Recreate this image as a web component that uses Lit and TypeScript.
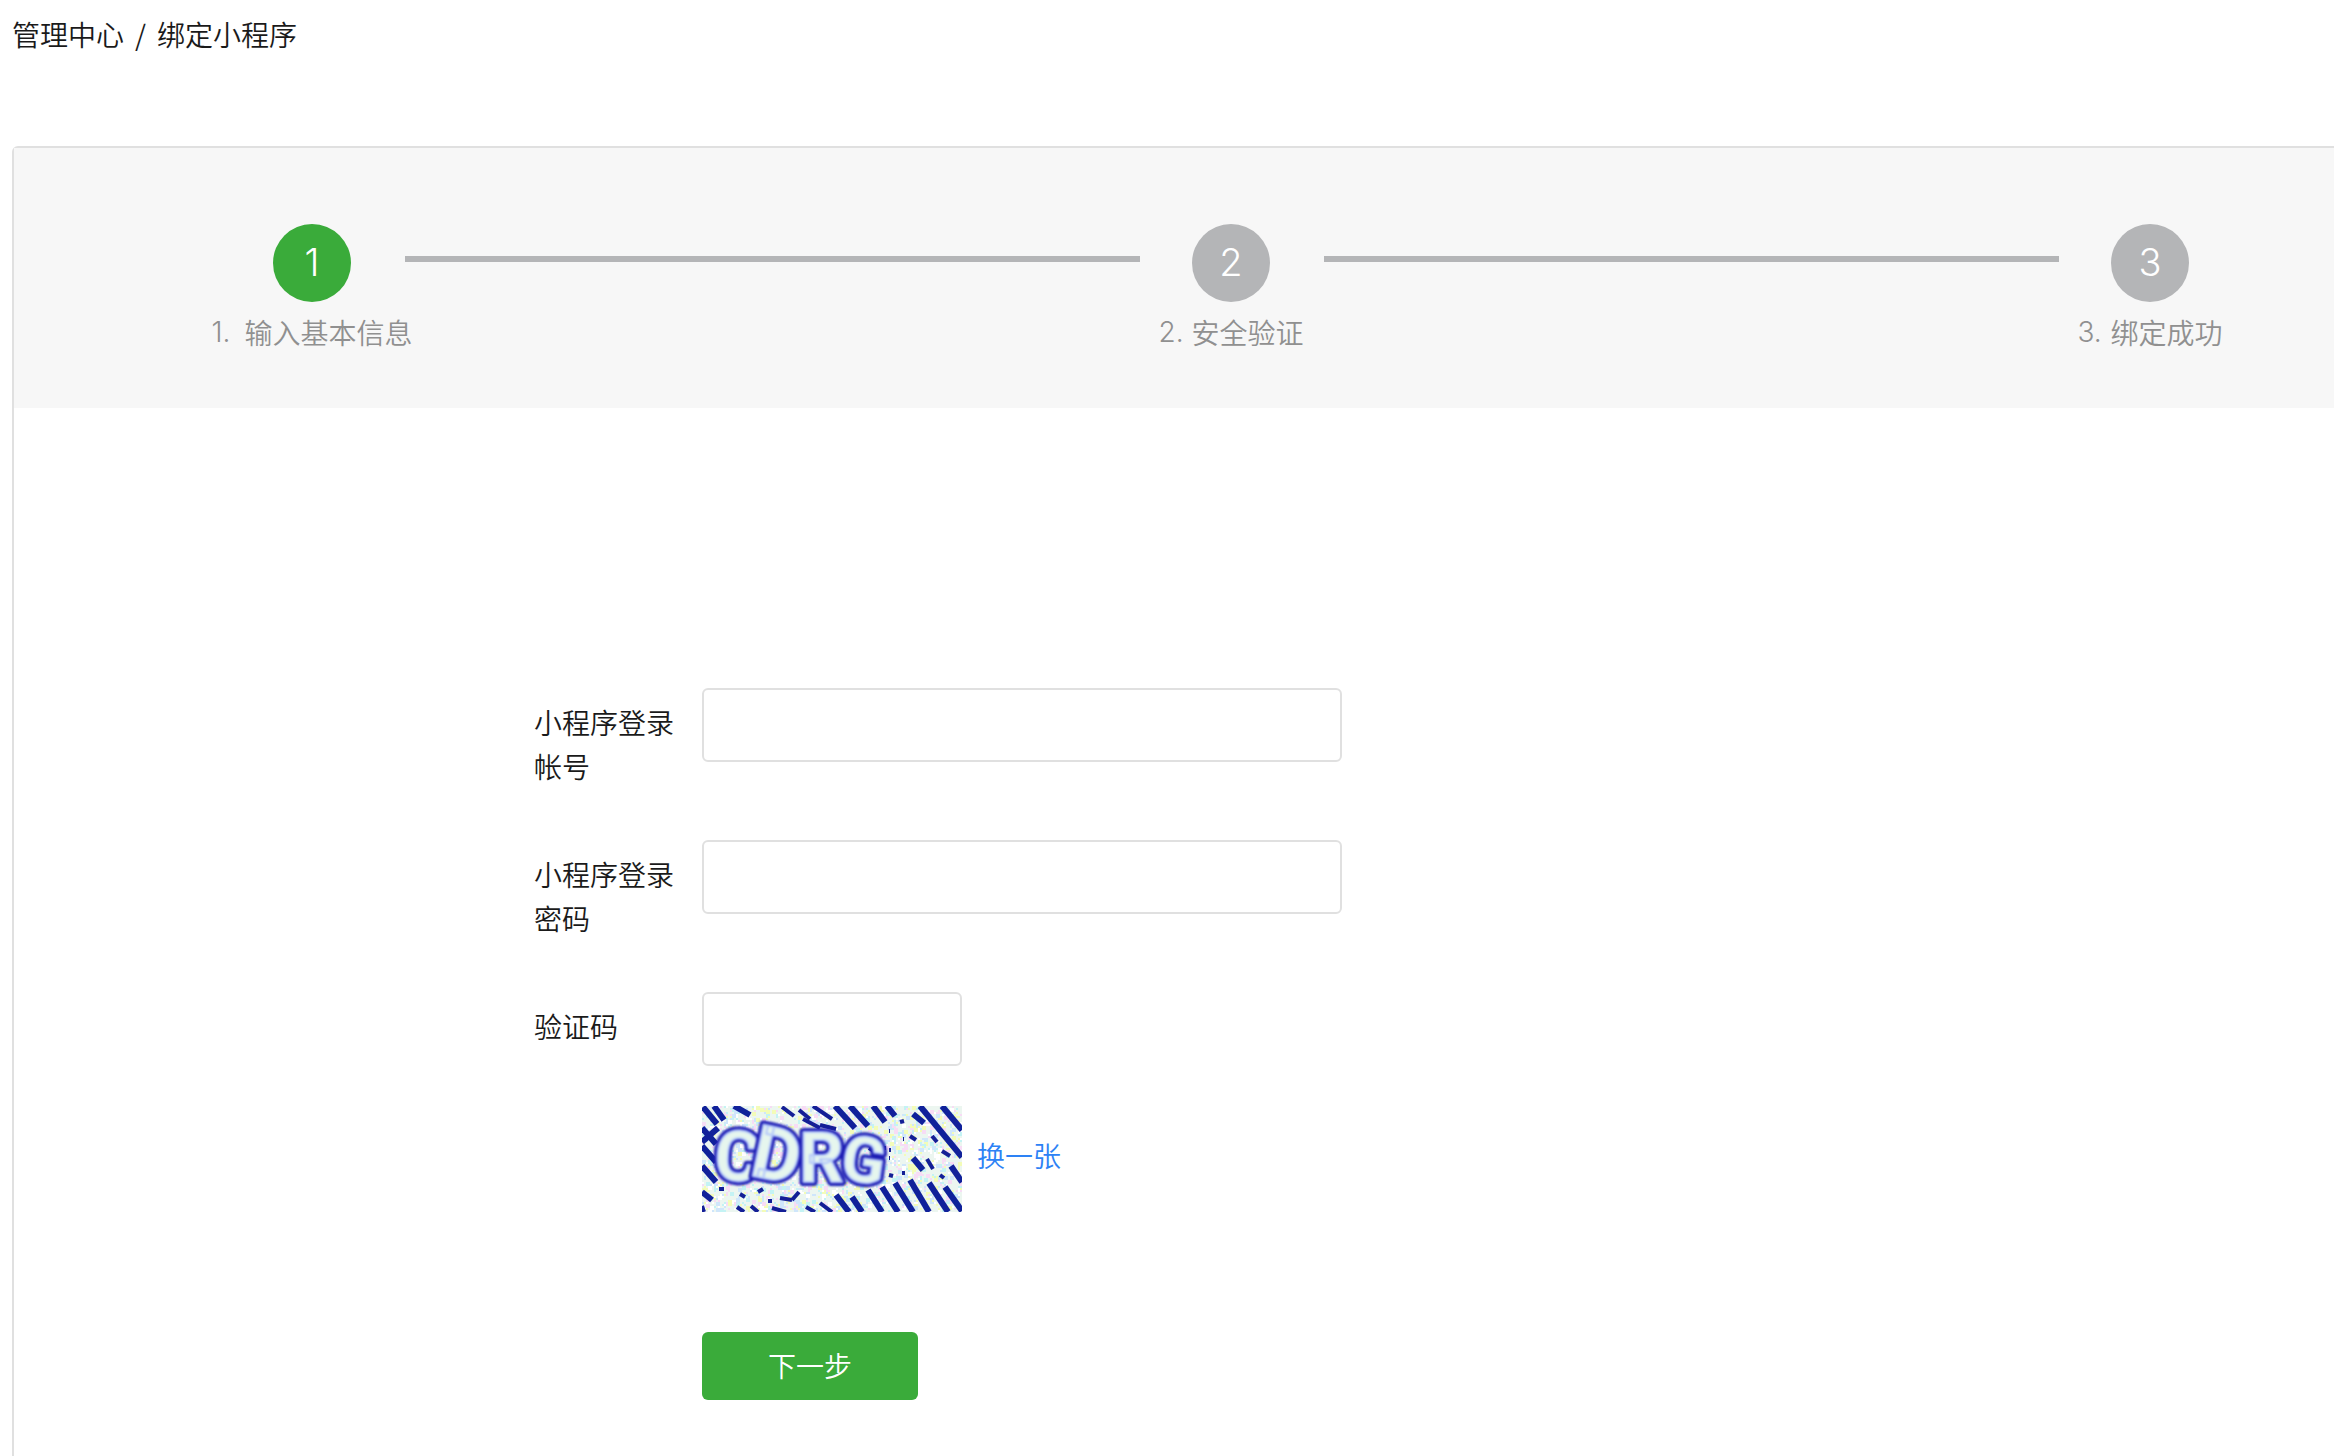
import { LitElement, html, css, svg } from "lit";
import { customElement } from "lit/decorators.js";
import { classMap } from "lit/directives/class-map.js";

type Segment = [number, number, number, number];

// Diagonal interference strokes of the captcha: x1, y1, x2, y2.
const BARS: Segment[] = [
  [171, 0, 183, 16], [185, 0, 193, 10], [211, 8, 222, 17], [218, 0, 260, 51],
  [240, 0, 260, 24], [193, 77, 211, 106], [208, 74, 227, 106], [227, 77, 246, 106],
  [243, 81, 260, 105], [249, 60, 260, 76], [180, 81, 196, 106], [166, 84, 180, 106],
  [133, 0, 153, 22], [148, 0, 166, 20], [211, 52, 221, 64], [134, 89, 147, 106],
  [150, 91, 160, 106], [1, 1, 15, 18], [12, 0, 22, 14], [32, 0, 48, 9],
  [0, 60, 14, 76], [0, 86, 10, 94], [0, 36, 16, 22], [0, 40, 14, 56],
  [0, 22, 14, 38],
];
const DASHES: Segment[] = [
  [111, 0, 130, 13], [101, 13, 118, 22], [208, 30, 214, 34], [230, 30, 235, 36],
  [240, 45, 248, 50], [225, 53, 231, 63], [238, 69, 242, 72], [187, 69, 191, 70],
  [200, 67, 203, 67], [167, 42, 177, 48], [118, 97, 130, 106], [104, 101, 113, 106],
  [35, 101, 42, 106], [49, 100, 56, 106], [70, 102, 84, 106], [78, 92, 90, 94],
  [90, 94, 97, 86], [66, 95, 70, 95], [38, 88, 43, 91], [56, 86, 61, 83],
  [17, 83, 22, 83], [198, 16, 202, 15], [80, 1, 92, 10], [97, 4, 108, 13],
  [118, 19, 134, 23], [0, 100, 2, 106], [187, 25, 188, 25], [201, 33, 202, 33],
  [182, 42, 184, 42], [187, 44, 189, 44], [187, 52, 188, 52],
];
const GLYPHS = [
  { char: "C", x: 11, y: 73, size: 70, turn: 4 },
  { char: "D", x: 46, y: 69, size: 74, turn: 12 },
  { char: "R", x: 97, y: 76, size: 70, turn: 0 },
  { char: "G", x: 137, y: 73, size: 64, turn: 8 },
];
const TINTS = ["#c4f3f4", "#f7dcf5", "#f3fcb8", "#ffffff", "#cfe6fb"];

function speckles(count: number) {
  let seed = 7;
  const next = () => (seed = (seed * 16807) % 2147483647) / 2147483647;
  return Array.from({ length: count }, () => ({
    x: Math.floor(next() * 130) * 2,
    y: Math.floor(next() * 53) * 2,
    size: next() > 0.7 ? 4 : 2,
    tint: TINTS[Math.floor(next() * TINTS.length)],
  }));
}
const SPECKLES = speckles(2400);

@customElement("captcha-image")
export class CaptchaImage extends LitElement {
  static styles = css`
    :host { display: block; }
    .image { display: block; width: 260px; height: 106px; }
    .bar { stroke: #10219a; stroke-width: 6; }
    .dash { stroke: #141f96; stroke-width: 4; }
    .glyph { font-family: Roboto, "Liberation Sans", sans-serif; font-weight: 700; stroke-linejoin: round; }
    .edge { fill: #1c1cb4; stroke: #1c1cb4; stroke-width: 8; }
    .face { fill: #e6f6ee; stroke: #b4c8fa; stroke-width: 2; }
    .letters { filter: blur(1px); }
  `;

  private letter(g: (typeof GLYPHS)[number]) {
    return svg`
      <g transform="rotate(${g.turn} ${g.x} ${g.y})">
        <text class="glyph edge" x=${g.x} y=${g.y} font-size=${g.size}>${g.char}</text>
        <text class="glyph face" x=${g.x} y=${g.y} font-size=${g.size}>${g.char}</text>
      </g>`;
  }

  render() {
    const line = (kind: string) => (s: Segment) =>
      svg`<line class=${kind} x1=${s[0]} y1=${s[1]} x2=${s[2]} y2=${s[3]}></line>`;
    return html`
      <svg class="image" viewBox="0 0 260 106" aria-hidden="true">
        <rect width="260" height="106" fill="#ecf6f0"></rect>
        ${SPECKLES.map((s) => svg`<rect x=${s.x} y=${s.y} width=${s.size} height=${s.size} fill=${s.tint}></rect>`)}
        ${BARS.map(line("bar"))}
        ${DASHES.map(line("dash"))}
        <g class="letters">${GLYPHS.map((g) => this.letter(g))}</g>
      </svg>
    `;
  }
}

const STEPS = [
  { number: 1, text: "输入基本信息" },
  { number: 2, text: "安全验证" },
  { number: 3, text: "绑定成功" },
];

@customElement("app-root")
export class AppRoot extends LitElement {
  static styles = css`
    :host {
      display: block;
      min-height: 100vh;
      overflow: hidden;
      background: #fff;
      color: #1a1a1a;
      font-family: "Noto Sans CJK SC", sans-serif;
      font-size: 28px;
      font-weight: 350;
      line-height: 44px;
    }
    * { box-sizing: border-box; }
    .page { display: flex; flex-direction: column; min-height: 100vh; }
    .crumbs { display: flex; gap: 11px; padding: 12px 12px 90px; }
    .crumb { color: inherit; text-decoration: none; }
    .card {
      flex: 1;
      margin: 0 -116px 0 12px;
      border: 2px solid #e0e0e0;
      border-bottom: 0;
      border-radius: 6px 6px 0 0;
    }
    .steps {
      display: flex;
      align-items: flex-start;
      height: 260px;
      margin: 0;
      padding: 76px 207px 0 207px;
      list-style: none;
      background: #f7f7f7;
    }
    .step { display: flex; flex-direction: column; align-items: center; width: 182px; gap: 8px; }
    .digit { font-family: Inter, "Liberation Sans", sans-serif; font-weight: 300; }
    .circle {
      width: 78px;
      height: 78px;
      border-radius: 50%;
      background: #b4b5b7;
      color: #fff;
      font-size: 38px;
      line-height: 76px;
      text-align: center;
    }
    .current { background: #3aab3a; }
    .caption { display: flex; gap: 8px; color: #909090; white-space: nowrap; }
    .ordinal { min-width: 25px; }
    .track { flex: 1; height: 6px; margin: 32px 0 0 2px; background: #b4b5b7; }
    .form { padding: 280px 0 0 520px; }
    .row { display: flex; align-items: flex-start; gap: 28px; height: 152px; }
    .label { width: 140px; padding-top: 12px; }
    .field {
      width: 640px;
      height: 74px;
      padding: 0 16px;
      border: 2px solid #e0e0e0;
      border-radius: 6px;
      background: #fff;
      color: inherit;
      font: inherit;
    }
    .short { width: 260px; }
    .captcha { display: flex; align-items: center; gap: 15px; margin: -38px 0 0 168px; }
    .refresh { padding-bottom: 8px; color: #2d82f5; text-decoration: none; }
    .submit {
      display: block;
      width: 216px;
      height: 68px;
      margin: 120px 0 0 168px;
      padding: 0 0 2px;
      border: 0;
      border-radius: 6px;
      background: #3aab3a;
      color: #fff;
      font: inherit;
    }
  `;

  render() {
    return html`
      <div class="page">
        <nav class="crumbs">
          <a class="crumb" href="#">管理中心</a><span>/</span><span>绑定小程序</span>
        </nav>
        <main class="card">
          <ol class="steps">
            ${STEPS.map(
              (step, i) => html`
                ${i > 0 ? html`<li class="track" role="presentation"></li>` : ""}
                <li class="step">
                  <span class=${classMap({ digit: true, circle: true, current: i === 0 })}>${step.number}</span>
                  <span class="caption"><span class="digit ordinal">${step.number}.</span><span>${step.text}</span></span>
                </li>
              `
            )}
          </ol>
          <form class="form">
            <div class="row">
              <label class="label" for="account">小程序登录帐号</label>
              <input class="field" id="account" type="text" />
            </div>
            <div class="row">
              <label class="label" for="password">小程序登录密码</label>
              <input class="field" id="password" type="password" />
            </div>
            <div class="row">
              <label class="label" for="code">验证码</label>
              <input class="field short" id="code" type="text" />
            </div>
            <div class="captcha">
              <captcha-image></captcha-image>
              <a class="refresh" href="#">换一张</a>
            </div>
            <button class="submit" type="button">下一步</button>
          </form>
        </main>
      </div>
    `;
  }
}
